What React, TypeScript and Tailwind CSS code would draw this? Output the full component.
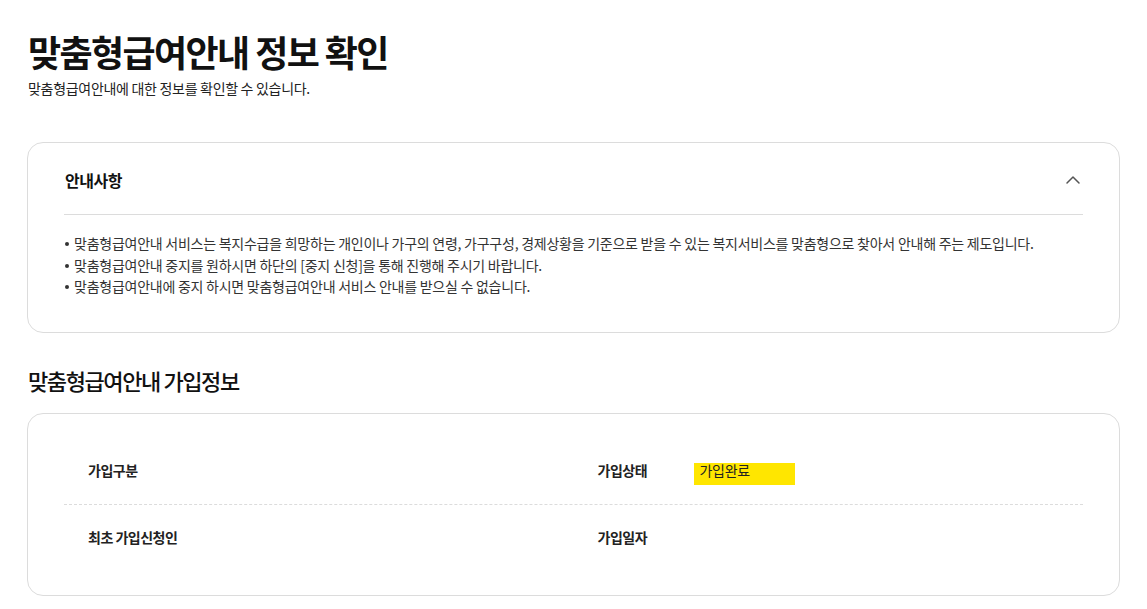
import { ChevronUp } from "lucide-react";

const FONT = "font-['Noto_Sans_CJK_KR','Noto_Sans',sans-serif]";

const notices = [
  "맞춤형급여안내 서비스는 복지수급을 희망하는 개인이나 가구의 연령, 가구구성, 경제상황을 기준으로 받을 수 있는 복지서비스를 맞춤형으로 찾아서 안내해 주는 제도입니다.",
  "맞춤형급여안내 중지를 원하시면 하단의 [중지 신청]을 통해 진행해 주시기 바랍니다.",
  "맞춤형급여안내에 중지 하시면 맞춤형급여안내 서비스 안내를 받으실 수 없습니다.",
];

function InfoCell({ label, value }: { label: string; value?: string }) {
  return (
    <div className="flex h-[66px] items-center pl-6">
      <span className="w-24 shrink-0 text-[14px] font-bold tracking-[-0.5px] text-[#222]">{label}</span>
      {value ? (
        <span className="mt-[6px] flex h-[22px] w-[101px] items-start bg-[#ffe600] px-[6px] text-[14px] leading-[15px] tracking-[-0.3px] text-[#222]">
          {value}
        </span>
      ) : null}
    </div>
  );
}

export default function App() {
  return (
    <div className={`${FONT} min-h-screen bg-white px-[27px] pt-[26px] pb-4 text-[#222]`}>
      {/* page heading */}
      <h1 className="pl-px text-[36px] leading-[50px] font-bold tracking-[-1.6px] text-[#111]">
        맞춤형급여안내 정보 확인
      </h1>
      <p className="mt-[2px] pl-px text-[14px] leading-[20px] tracking-[-0.3px] text-[#222]">
        맞춤형급여안내에 대한 정보를 확인할 수 있습니다.
      </p>

      {/* notice accordion */}
      <section className="mt-[44px] rounded-[16px] border border-[#dcdcdc] px-9 pt-[25px] pb-[34px]">
        <div className="flex items-center justify-between border-b border-[#dcdcdc] pb-[22px]">
          <h2 className="pl-px text-[16px] leading-[24px] font-bold tracking-[-0.5px] text-[#111]">안내사항</h2>
          <ChevronUp className="-mr-[2px] h-6 w-6 text-[#555]" strokeWidth={1.5} />
        </div>
        <ul className="mt-[18px] flex flex-col">
          {notices.map((n) => (
            <li key={n} className="flex items-start text-[14px] leading-[21.5px] tracking-[-0.25px] text-[#333]">
              <span className="mt-[9px] mr-[5px] ml-px h-[4px] w-[4px] shrink-0 rounded-full bg-[#333]" />
              {n}
            </li>
          ))}
        </ul>
      </section>

      {/* subscription info */}
      <h2 className="mt-[31px] pl-px text-[22px] leading-[32px] font-medium tracking-[-1.4px] text-[#111]">
        맞춤형급여안내 가입정보
      </h2>
      <section className="mt-[17px] rounded-[16px] border border-[#dcdcdc] px-9 py-6">
        <div className="grid grid-cols-2 border-b border-dashed border-[#dcdcdc]">
          <InfoCell label="가입구분" />
          <InfoCell label="가입상태" value="가입완료" />
        </div>
        <div className="grid grid-cols-2">
          <InfoCell label="최초 가입신청인" />
          <InfoCell label="가입일자" />
        </div>
      </section>
    </div>
  );
}
